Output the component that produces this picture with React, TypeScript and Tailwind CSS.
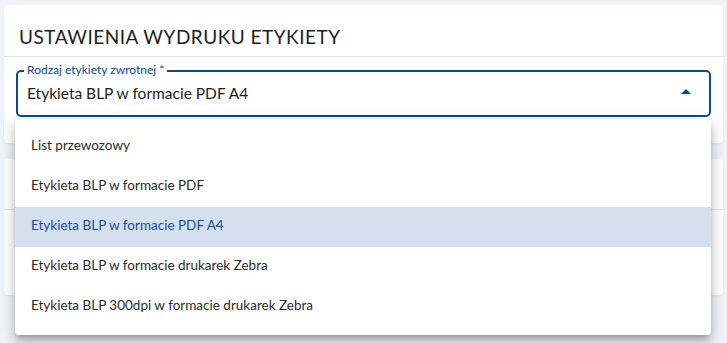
import { useState } from "react";

const options = [
  "List przewozowy",
  "Etykieta BLP w formacie PDF",
  "Etykieta BLP w formacie PDF A4",
  "Etykieta BLP w formacie drukarek Zebra",
  "Etykieta BLP 300dpi w formacie drukarek Zebra",
];

const App = () => {
  const [selected, setSelected] = useState(2);

  return (
    <div
      className="relative h-[343px] w-full overflow-hidden bg-[#eff3f8] px-[4px] pt-[5px]"
      style={{ fontFamily: 'Lato, "Liberation Sans", sans-serif' }}
    >
      <div className="w-[719px] rounded-[4px] bg-white shadow-[0_1px_2px_rgba(0,0,0,0.06)]">
        <div className="flex h-[52px] items-end border-b border-[#e2e4e8] px-[15px] pb-[7px]">
          <h2 className="text-[19px] leading-[24px] tracking-[0.5px] text-[#1d1d1f]">
            USTAWIENIA WYDRUKU ETYKIETY
          </h2>
        </div>
        <div className="px-[12px] pb-[26px] pt-[13px]">
          <div className="relative flex h-[47px] w-[695px] items-center rounded-[5px] border-2 border-[#0d4a8b] pl-[9px] pr-[18px]">
            <span className="absolute -top-[9px] left-[6px] bg-white px-[3px] text-[12px] leading-[14px] text-[#0d4a8b]">
              Rodzaj etykiety zwrotnej *
            </span>
            <span className="flex-1 pt-[1px] text-[15.5px] text-[#1d1d1f]">
              {options[selected]}
            </span>
            <svg width="10" height="5" viewBox="0 0 10 5" className="mb-[5px]">
              <path d="M0 5 L5 0 L10 5 Z" fill="#0d4a8b" />
            </svg>
          </div>
        </div>
      </div>

      <div className="mt-[16px] h-[136px] w-[719px] rounded-[4px] bg-white shadow-[0_1px_2px_rgba(0,0,0,0.06)]">
        <div className="h-[51px] border-b border-[#e2e4e8]" />
      </div>

      <ul className="absolute left-[15px] top-[119px] w-[696px] rounded-[4px] bg-white py-[8px] shadow-[0_5px_5px_-3px_rgba(0,0,0,0.2),0_8px_10px_1px_rgba(0,0,0,0.14),0_3px_14px_2px_rgba(0,0,0,0.12)]">
        {options.map((o, i) => (
          <li
            key={o}
            onClick={() => setSelected(i)}
            className={
              i === selected
                ? "flex h-[40px] cursor-pointer items-center bg-[#d5e0ee] px-[16px] pb-[3px] text-[13.5px] text-[#1b4f94]"
                : "flex h-[40px] cursor-pointer items-center px-[16px] pb-[3px] text-[13.5px] text-[#2a2a2a]"
            }
          >
            {o}
          </li>
        ))}
      </ul>
    </div>
  );
};

export default App;
